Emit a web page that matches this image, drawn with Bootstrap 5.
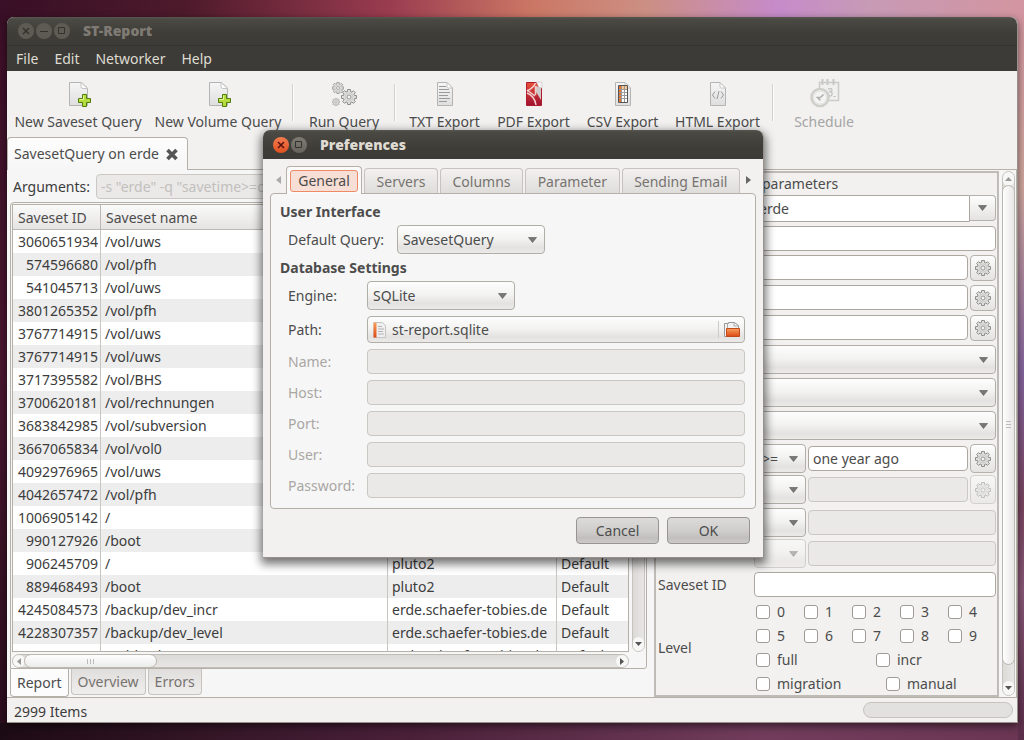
<!DOCTYPE html>
<html lang="en">
<head>
<meta charset="utf-8">
<meta name="viewport" content="width=device-width, initial-scale=1">
<title>ST-Report</title>
<link href="https://cdn.jsdelivr.net/npm/bootstrap@5.3.0/dist/css/bootstrap.min.css" rel="stylesheet">
<style>
  :root { --edge: #b5b0a8; --ink: #4c4c4c; }
  body {
    font: 14px/20px "Noto Sans", "Open Sans", sans-serif;
    color: #3c3c3c;
    padding: 17px 6px 17px 7px;
    min-height: 100vh;
    background:
      linear-gradient(90deg, #380f26 0, #4d1a2b 18%, #9a3c50 38%, #cb7765 52%, #cc8f83 63%, #c68bca 76%, #c79ab5 85%, #d395a0 100%) top / 100% 26px no-repeat,
      linear-gradient(180deg, #d395a0 0, #d3a9a0 25%, #8666a0 50%, #7a4560 68%, #8a5878 80%, #5a2d48 100%) right / 6px 100% no-repeat,
      linear-gradient(90deg, #1d0b14 0, #4a2039 40%, #723d5c 75%, #6a3653 100%) bottom / 100% 17px no-repeat,
      linear-gradient(180deg, #3c0f28, #4a1630 50%, #2a0d1c);
  }
  button, input, select { font: inherit; color: inherit; }
  .desk-window { background: #f2f1f0; border-radius: 7px 7px 0 0; box-shadow: 0 3px 8px rgba(0,0,0,.55); border: solid #98918b; border-width: 0 1px 1px 0; }
  .titlebar { height: 29px; border-radius: 7px 7px 0 0; background: linear-gradient(#57564f 0, #4a4943 8%, #3e3d38 60%, #3c3b37); font-weight: 700; }
  .main-title { color: #7f7b74; padding-left: 11px; border-bottom: 1px solid #343330; }
  .main-title b { padding-left: 11px; }
  .win-btn { width: 16px; height: 16px; padding: 0; border: 0; border-radius: 50%; background: #5d5b54; color: #33322e; margin-right: 2px; display: flex; }
  .win-btn.hot { background: linear-gradient(#f47b50, #e0501e); color: #511; }
  .win-btn.soft { background: linear-gradient(#7d7a72, #66645d); }
  .menu-strip { height: 25px; background: #3c3b37; padding-left: 9px; gap: 16px; }
  .menu-strip a { color: #dfdbd2; text-decoration: none; }
  .tools { height: 66px; padding: 6px 0 0 1px; }
  .tool { border: 0; background: none; padding: 0; color: var(--ink); width: 89px; white-space: nowrap; display: flex; flex-direction: column; align-items: center; justify-content: space-between; height: 55px; flex: none; }
  .tool svg { display: block; height: 33px; width: 33px; }
  .tool.wide { width: 140px; }
  .tool.mid { width: 92px; }
  .tool.web { width: 101px; }
  .tool:disabled { color: #a5a5a5; }
  .tool-sep { width: 10px; flex: none; height: 37px; margin-top: 7px; display: flex; justify-content: center; }
  .tool-sep::before { content: ""; border-left: 1px solid #d2d0cd; border-right: 1px solid #fbfbfb; }
  .book-tab { width: 181px; height: 33px; border: 1px solid var(--edge); border-bottom: 0; border-radius: 4px 4px 0 0; background: linear-gradient(#fdfdfd, #f6f6f6); padding-left: 6px; gap: 6px; color: var(--ink); margin-bottom: -1px; }
  .book-body { background: #f6f6f6; border: 1px solid var(--edge); border-width: 1px 1px 1px 0; }
  .report { flex: 1 1 0; min-width: 0; padding-left: 3px; }
  .entry { height: 25px; border: 1px solid #aca79f; border-radius: 4px; background: #fff; padding: 0 4px; min-width: 0; display: block; width: 100%; }
  .entry:disabled { background: #eae9e8; border-color: #cbc8c4; color: #c2bfbc; }
  .args { height: 32px; padding: 4px 8px 3px 3px; gap: 6px; }
  .table-frame { border: 1px solid var(--edge); border-radius: 4px 0 3px 0; padding: 1px 1px 0 1px; margin-right: 7px; height: 467px; }
  .list-view { height: 448px; border: 1px solid var(--edge); background: #fff; overflow: hidden; }
  .list-view table { width: 100%; table-layout: fixed; border-collapse: separate; border-spacing: 0; white-space: nowrap; line-height: 23px; color: #3c3c3c; }
  .list-view th { font-weight: 400; height: 25px; background: linear-gradient(#fafafa, #e6e4e2); border-right: 1px solid #bcb8b3; border-bottom: 1px solid #bcb8b3; padding: 0 5px; color: var(--ink); }
  .list-view td { height: 23px; padding: 0 4px; border-right: 1px solid #c9c6c2; }
  .list-view th:last-child, .list-view td:last-child { border-right: 0; }
  .list-view tbody tr:nth-child(even) { background: #ededed; }
  .list-view td:first-child { text-align: right; padding: 0 2px; }
  .vbar { width: 13px; flex: none; border: 1px solid #c6c2bd; border-radius: 8px; background: linear-gradient(90deg, #dcdad7, #e8e6e4); display: flex; flex-direction: column; align-items: center; }
  .hbar { height: 14px; border: 1px solid #c0bcb7; border-radius: 8px; background: linear-gradient(#dcdad7, #e8e6e4); display: flex; margin: 2px 16px 0 0; }
  .form-bar { margin: 1px 1px 1px 3px; }
  .knob { background: linear-gradient(#fefefe, #ececeb); border: 1px solid #bbb7b1; border-radius: 8px; margin: -1px; display: flex; align-items: center; justify-content: center; flex: none; width: 133px; }
  .knob.tall { background: linear-gradient(90deg, #fefefe, #e8e7e6); width: 13px; height: 480px; }
  .cap { display: flex; align-items: center; justify-content: center; background: #f7f7f6; flex: none; width: 12px; height: 12px; border-radius: 6px; }
  .vbar .cap { width: 11px; height: 14px; }
  .low-tabs { height: 28px; gap: 2px; align-items: flex-start; }
  .low-tabs a { border: 1px solid #c6c2be; border-top: 0; border-radius: 0 0 4px 4px; height: 26px; line-height: 26px; padding: 0 6px; color: #77736f; text-decoration: none; background: linear-gradient(#e0dedc, #efeeed); }
  .low-tabs a.on { height: 28px; line-height: 28px; background: #fcfcfc; color: var(--ink); border-color: var(--edge); }
  .params { flex: 0 0 344px; border: 2px solid #bfbbb6; background: #f2f1f0; margin-top: 1px; padding: 1px 1px 0 1px; color: var(--ink); }
  .prow { display: flex; margin-bottom: 4px; gap: 2px; padding-left: 97px; }
  .prow.near { margin-bottom: 2px; }
  .prow.head-row { height: 21px; margin-bottom: 0; padding-left: 105px; }
  .prow.full-row { padding-left: 0; gap: 0; }
  .row-name { flex: 0 0 97px; line-height: 25px; padding-left: 1px; }
  .row-name.level { flex-basis: 99px; }
  .level-row { margin: -1px 0 0; }
  .combo-h { height: 27px; }
  .drop { border: 1px solid #b1ada7; border-radius: 4px; appearance: none; color: var(--ink); padding: 0 24px 0 5px; height: 29px; background: url("data:image/svg+xml,%3Csvg xmlns='http://www.w3.org/2000/svg' width='9' height='6'%3E%3Cpath d='M.5.500h8L4.500 5.500z' fill='%23777' stroke='%23555' stroke-width='.6'/%3E%3C/svg%3E") no-repeat right 7px center, linear-gradient(#fdfdfd, #f3f3f2 45%, #e3e2e0 80%, #ebeae9); min-width: 0; }
  .drop:disabled { opacity: .5; }
  .drop.op { width: 52px; flex: none; padding-left: 7px; }
  .gear-btn { width: 26px; height: 26px; flex: none; border: 1px solid #b5b1ab; border-radius: 4px; background: linear-gradient(#fdfdfd, #e4e3e1); padding: 0; display: flex; align-items: center; justify-content: center; }
  .gear-btn.tall { height: 29px; }
  .gear-btn:disabled { opacity: .5; }
  .level-grid { flex: 1; }
  .level-grid > div { display: flex; height: 24px; align-items: center; }
  .level-grid > div:last-child { height: 23px; }
  .tick { display: flex; align-items: center; gap: 7px; flex: none; width: 48px; }
  .tick.half { width: 120px; }
  .tick.more { width: 130px; }
  .tick input { appearance: none; width: 14px; height: 14px; flex: none; border: 1px solid #9f9a94; border-radius: 3px; background: #fff; margin: 0; }
  .status { height: 24px; padding: 3px 4px 0 7px; }
  .meter { width: 150px; height: 16px; border: 1px solid #c7c4c0; border-radius: 8px; background: #e2e1df; margin-bottom: 3px; }

  /* Preferences window, lying over the main one */
  .prefs { position: absolute; left: 263px; top: 130px; width: 501px; background: #f2f1f0; border-radius: 7px 7px 0 0; box-shadow: 0 4px 10px 2px rgba(0,0,0,.55); border: solid #98918b; border-width: 0 1px 1px 0; }
  .prefs .titlebar { color: #dfdbd2; padding-left: 10px; }
  .prefs .titlebar b { padding-left: 11px; }
  .ptabs { padding: 7px 9px 0 9px; gap: 2px; align-items: flex-end; height: 34px; }
  .ptabs a { height: 25px; border: 1px solid #c6c2be; border-bottom: 0; border-radius: 4px 4px 0 0; text-decoration: none; color: #77736f; background: linear-gradient(#f2f1f0, #dfddda); line-height: 26px; text-align: center; flex: 1 1 auto; }
  .ptabs a.on { height: 28px; flex: 0 0 76px; background: #fafafa; border-color: var(--edge); margin-bottom: -1px; padding: 3px; color: var(--ink); position: relative; }
  .ptabs a.on span { display: block; height: 22px; line-height: 20px; border: 1px solid #ee8a66; border-radius: 3px; background: #f8dfd6; }
  .tab-arrow { width: 12px; height: 27px; display: flex; align-items: center; justify-content: center; padding: 0; border: 0; background: none; flex: none; }
  .ppanel { margin: 0 7px; border: 1px solid var(--edge); border-radius: 4px; background: #f6f6f6; padding: 8px 10px 10px 9px; color: var(--ink); }
  .ppanel h2 { font-size: 14px; line-height: 20px; font-weight: 700; margin: 0 0 3px; }
  .pline { display: flex; align-items: center; padding-left: 8px; margin-bottom: 6px; }
  .pline.first { margin-bottom: 4px; }
  .pline label { width: 79px; flex: none; }
  .pline.first label { width: 109px; }
  .pline .drop { width: 148px; }
  .pline.dim label { color: #a9a6a3; }
  .chooser { height: 27px; flex: 1; border: 1px solid #b1ada7; border-radius: 4px; background: linear-gradient(#fdfdfd, #f3f3f2 45%, #e3e2e0 80%, #ebeae9); padding: 0 3px 0 4px; display: flex; align-items: center; gap: 4px; color: var(--ink); }
  .chooser i { border-left: 1px solid #cfccc8; height: 17px; margin-left: auto; }
  .pactions { padding: 8px 13px 13px; }
  .pbtn { width: 83px; height: 27px; border: 1px solid #989590; border-radius: 4px; background: linear-gradient(#dcdbda, #cfcecd 50%, #c0bfbe 80%, #cccbca); color: var(--ink); padding: 0; }
</style>
</head>
<body>
<svg width="0" height="0" class="position-absolute" aria-hidden="true">
  <defs>
    <linearGradient id="paper" x1="0" y1="0" x2="0" y2="1"><stop offset="0" stop-color="#f6f6f6"/><stop offset="1" stop-color="#dedede"/></linearGradient>
    <linearGradient id="redp" x1="0" y1="0" x2="0" y2="1"><stop offset="0" stop-color="#e8513a"/><stop offset="1" stop-color="#a01030"/></linearGradient>
    <linearGradient id="orng" x1="0" y1="0" x2="0" y2="1"><stop offset="0" stop-color="#f7a05c"/><stop offset="1" stop-color="#dd4814"/></linearGradient>
    <symbol id="page" viewBox="0 0 16 24"><path d="M.5.500h9.500l5.500 5.500v17.500H.5z" fill="url(#paper)" stroke="#b4b4b4"/><path d="M10 .5v4q0 1.500 1.500 1.500h4z" fill="#fff" stroke="#c4c4c4"/></symbol>
    <symbol id="widepage" viewBox="0 0 19 24"><path d="M.5.500h12l6 5.500v17.500H.5z" fill="url(#paper)" stroke="#b4b4b4"/><path d="M12 .5v4q0 2 2 2h4.500z" fill="#fff" stroke="#c4c4c4"/></symbol>
    <symbol id="gear" viewBox="0 0 16 16"><path d="M6.500.5h3v2l1.500.6L12.400 1.700l2 2L13 5.100l.5 1.400h2v3h-2L13 11l1.400 1.400-2 2L11 13l-1.500.5v2h-3v-2L5 13l-1.400 1.400-2-2L3 11l-.5-1.500h-2v-3h2L3 5 1.600 3.600l2-2L5 3l1.500-.5z" fill="#dededc" stroke="#8f8f8c"/><circle cx="8" cy="8" r="2" fill="#f2f2f2" stroke="#9a9a98"/><circle cx="8" cy="8" r="4" fill="none" stroke="#c0c0be" stroke-width=".6"/></symbol>
  </defs>
</svg>

<main class="desk-window d-flex flex-column">
  <header class="titlebar main-title d-flex align-items-center">
    <button class="win-btn" aria-label="Close"><svg viewBox="0 0 16 16"><path d="M5 5l6 6M11 5l-6 6" stroke="currentColor" stroke-width="1.500"/></svg></button>
    <button class="win-btn" aria-label="Minimize"><svg viewBox="0 0 16 16"><path d="M4 8.500h8" stroke="currentColor"/></svg></button>
    <button class="win-btn" aria-label="Maximize"><svg viewBox="0 0 16 16"><path d="M4.500 4.500h6v6h-6z" fill="none" stroke="currentColor"/></svg></button>
    <b>ST-Report</b>
  </header>
  <nav class="menu-strip d-flex align-items-center"><a href="#">File</a><a href="#">Edit</a><a href="#">Networker</a><a href="#">Help</a></nav>

  <div class="tools d-flex">
    <button class="tool wide"><svg viewBox="0 0 33 33"><use href="#widepage" x="7" y="5" width="19" height="24"/><path d="M20.500 17.500h4v4h4v4h-4v4h-4v-4h-4v-4h4z" fill="#b5dc3c" stroke="#4f7d0a"/><path d="M21.500 18.500v4h-4" fill="none" stroke="#e4f59a"/></svg>New Saveset Query</button>
    <button class="tool wide"><svg viewBox="0 0 33 33"><use href="#widepage" x="7" y="5" width="19" height="24"/><path d="M20.500 17.500h4v4h4v4h-4v4h-4v-4h-4v-4h4z" fill="#b5dc3c" stroke="#4f7d0a"/><path d="M21.500 18.500v4h-4" fill="none" stroke="#e4f59a"/></svg>New Volume Query</button>
    <span class="tool-sep"></span>
    <button class="tool mid"><svg viewBox="0 0 33 33"><use href="#gear" x="4" y="5" width="12" height="12"/><use href="#gear" x="13" y="12" width="16" height="16"/><use href="#gear" x="4" y="21" width="8" height="8"/></svg>Run Query</button>
    <span class="tool-sep"></span>
    <button class="tool"><svg viewBox="0 0 33 33"><use href="#page" x="9" y="5" width="16" height="24"/><path d="M11 9.500h7M11 12.500h10M11 15.500h11M11 18.500h9M11 21.500h11M11 24.500h8" stroke="#999"/></svg>TXT Export</button>
    <button class="tool"><svg viewBox="0 0 33 33"><path d="M9.500 5.500h10l5 5v18h-15z" fill="url(#redp)" stroke="#b01a2e"/><path d="M19 9l5 2v12l-3-5-2-3z" fill="#cfcaca"/><path d="M19.500 5h5.500v6l-3-.5z" fill="#f4f4f4" stroke="#c4c4c4" stroke-width=".6"/><path d="M10 14C14 12 17 10 18.500 6" fill="none" stroke="#f3d0d0" stroke-width="1.500"/><path d="M10 16c5 2 8 6 9 12M10 13l8 6M18.500 9v9" fill="none" stroke="#f3d0d0" stroke-width="1.500"/></svg>PDF Export</button>
    <button class="tool"><svg viewBox="0 0 33 33"><use href="#page" x="9" y="5" width="16" height="24"/><path d="M12.500 8.500h9v17h-9z" fill="#fff"/><path d="M13 9h2v16h-2z" fill="#e8742c"/><path d="M15 9h6v3h-6z" fill="#f4c48c"/><path d="M15.500 9v16M18.500 9v16M13 12.500h8M13 15.500h8M13 18.500h8M13 21.500h8" stroke="#999"/><path d="M12.500 8.500h9v17h-9z" fill="none" stroke="#555"/></svg>CSV Export</button>
    <button class="tool web"><svg viewBox="0 0 33 33"><use href="#page" x="9" y="5" width="16" height="24"/><path d="M14 14.500l-2.500 3.500 2.500 3.500M20 14.500l2.500 3.500-2.500 3.500M18 14l-2 8" fill="none" stroke="#999"/></svg>HTML Export</button>
    <span class="tool-sep"></span>
    <button class="tool mid" disabled><svg viewBox="0 0 33 33"><path d="M11.500 5.500h19v18h-19z" fill="#f0f0ef" stroke="#cacac8" stroke-width="1.500"/><path d="M14.500 2v6M19.500 2v6M25.500 2v6" stroke="#c8c8c6" stroke-width="2"/><path d="M20 12q4-1 4 1t-3 1.500q4 .5 3 3t-3 1" fill="none" stroke="#c4c4c2" stroke-width="1.300"/><path d="M25.500 19.500h2" stroke="#bbb"/><circle cx="13" cy="20.500" r="8.500" fill="#f4f4f3" stroke="#cfcfc9" stroke-width="2.500" transform="translate(-1 0)"/><circle cx="12" cy="20.500" r="6.500" fill="none" stroke="#e0e0de"/><path d="M12.500 20.500l3-3M12.500 20.500h-3l3 3" stroke="#b0b0ae" stroke-width="1.600" fill="none"/></svg>Schedule</button>
  </div>

  <div class="book-tab d-flex align-items-center position-relative"><span>SavesetQuery on erde</span><svg width="14" height="13" viewBox="0 0 14 13" aria-label="Close tab"><path d="M2.500 2l9 9M11.500 2l-9 9" stroke="#555" stroke-width="3.600"/></svg></div>

  <section class="book-body d-flex flex-grow-1">
    <div class="report">
      <div class="args d-flex align-items-center"><label for="args">Arguments:</label><input id="args" class="entry" disabled value='-s "erde" -q "savetime&gt;=o'></div>
      <div class="table-frame">
        <div class="d-flex" style="gap:3px">
          <div class="list-view flex-grow-1">
            <table>
              <colgroup><col style="width:88px"><col><col style="width:169px"><col style="width:71px"></colgroup>
              <thead><tr><th>Saveset ID</th><th>Saveset name</th><th></th><th></th></tr></thead>
              <tbody>
                <tr><td>3060651934</td><td>/vol/uws</td><td></td><td></td></tr>
                <tr><td>574596680</td><td>/vol/pfh</td><td></td><td></td></tr>
                <tr><td>541045713</td><td>/vol/uws</td><td></td><td></td></tr>
                <tr><td>3801265352</td><td>/vol/pfh</td><td></td><td></td></tr>
                <tr><td>3767714915</td><td>/vol/uws</td><td></td><td></td></tr>
                <tr><td>3767714915</td><td>/vol/uws</td><td></td><td></td></tr>
                <tr><td>3717395582</td><td>/vol/BHS</td><td></td><td></td></tr>
                <tr><td>3700620181</td><td>/vol/rechnungen</td><td></td><td></td></tr>
                <tr><td>3683842985</td><td>/vol/subversion</td><td></td><td></td></tr>
                <tr><td>3667065834</td><td>/vol/vol0</td><td></td><td></td></tr>
                <tr><td>4092976965</td><td>/vol/uws</td><td></td><td></td></tr>
                <tr><td>4042657472</td><td>/vol/pfh</td><td></td><td></td></tr>
                <tr><td>1006905142</td><td>/</td><td></td><td></td></tr>
                <tr><td>990127926</td><td>/boot</td><td></td><td></td></tr>
                <tr><td>906245709</td><td>/</td><td>pluto2</td><td>Default</td></tr>
                <tr><td>889468493</td><td>/boot</td><td>pluto2</td><td>Default</td></tr>
                <tr><td>4245084573</td><td>/backup/dev_incr</td><td>erde.schaefer-tobies.de</td><td>Default</td></tr>
                <tr><td>4228307357</td><td>/backup/dev_level</td><td>erde.schaefer-tobies.de</td><td>Default</td></tr>
                <tr><td></td><td>/vol/backup/test</td><td>erde.schaefer-tobies.de</td><td>Default</td></tr>
              </tbody>
            </table>
          </div>
          <div class="vbar justify-content-end"><span class="cap"><svg width="7" height="4"><path d="M0 0h7L3.500 4z" fill="#555"/></svg></span></div>
        </div>
        <div class="hbar">
          <span class="cap"><svg width="4" height="7"><path d="M4 0v7L0 3.500z" fill="#999"/></svg></span>
          <span class="knob"><svg width="8" height="5"><path d="M.5 0v5M3.500 0v5M6.500 0v5" stroke="#bbb"/></svg></span>
          <span class="cap ms-auto"><svg width="4" height="7"><path d="M0 0v7L4 3.500z" fill="#555"/></svg></span>
        </div>
      </div>
      <nav class="low-tabs d-flex"><a class="on" href="#">Report</a><a href="#">Overview</a><a href="#">Errors</a></nav>
    </div>

    <form class="params">
      <div class="prow head-row"><span>parameters</span></div>
      <div class="prow gap-0"><input class="entry combo-h rounded-end-0" aria-label="Server" value="erde"><button type="button" class="gear-btn combo-h rounded-start-0 border-start-0" aria-label="Choose server"><svg width="9" height="6"><path d="M.5.500h8L4.500 5.500z" fill="#777" stroke="#555" stroke-width=".6"/></svg></button></div>
      <div class="prow"><input class="entry" aria-label="Client"></div>
      <div class="prow"><input class="entry" aria-label="Saveset name"><button type="button" class="gear-btn" aria-label="Options"><svg width="16" height="16"><use href="#gear"/></svg></button></div>
      <div class="prow"><input class="entry" aria-label="Group"><button type="button" class="gear-btn" aria-label="Options"><svg width="16" height="16"><use href="#gear"/></svg></button></div>
      <div class="prow"><input class="entry" aria-label="Pool"><button type="button" class="gear-btn" aria-label="Options"><svg width="16" height="16"><use href="#gear"/></svg></button></div>
      <div class="prow"><select class="drop w-100" aria-label="Filter 1"></select></div>
      <div class="prow"><select class="drop w-100" aria-label="Filter 2"></select></div>
      <div class="prow"><select class="drop w-100" aria-label="Filter 3"></select></div>
      <div class="prow near align-items-center"><select class="drop op" aria-label="Time operator"><option>&gt;=</option></select><input class="entry" aria-label="Time" value="one year ago"><button type="button" class="gear-btn tall" aria-label="Options"><svg width="16" height="16"><use href="#gear"/></svg></button></div>
      <div class="prow align-items-center"><select class="drop op" aria-label="Operator"></select><input class="entry" disabled aria-label="Value"><button type="button" disabled class="gear-btn tall" aria-label="Options"><svg width="16" height="16"><use href="#gear"/></svg></button></div>
      <div class="prow near align-items-center"><select class="drop op" aria-label="Operator"></select><input class="entry" disabled aria-label="Value"></div>
      <div class="prow align-items-center"><select class="drop op" disabled aria-label="Operator"></select><input class="entry" disabled aria-label="Value"></div>
      <div class="prow full-row"><label for="ssid" class="row-name">Saveset ID</label><input id="ssid" class="entry"></div>
      <div class="prow full-row level-row align-items-center"><span class="row-name level">Level</span>
        <div class="level-grid">
          <div><label class="tick"><input type="checkbox">0</label><label class="tick"><input type="checkbox">1</label><label class="tick"><input type="checkbox">2</label><label class="tick"><input type="checkbox">3</label><label class="tick"><input type="checkbox">4</label></div>
          <div><label class="tick"><input type="checkbox">5</label><label class="tick"><input type="checkbox">6</label><label class="tick"><input type="checkbox">7</label><label class="tick"><input type="checkbox">8</label><label class="tick"><input type="checkbox">9</label></div>
          <div><label class="tick half"><input type="checkbox">full</label><label class="tick"><input type="checkbox">incr</label></div>
          <div><label class="tick more"><input type="checkbox">migration</label><label class="tick w-auto"><input type="checkbox">manual</label></div>
        </div>
      </div>
    </form>
    <div class="vbar form-bar">
      <span class="cap"><svg width="7" height="4"><path d="M0 4h7L3.500 0z" fill="#999"/></svg></span>
      <span class="knob tall"><svg width="5" height="8"><path d="M0 .5h5M0 3.500h5M0 6.500h5" stroke="#bbb"/></svg></span>
      <span class="cap mt-auto"><svg width="7" height="4"><path d="M0 0h7L3.500 4z" fill="#555"/></svg></span>
    </div>
  </section>
  <footer class="status d-flex align-items-center"><span>2999 Items</span><span class="meter ms-auto"></span></footer>
</main>

<section class="prefs" role="dialog" aria-label="Preferences">
  <header class="titlebar d-flex align-items-center">
    <button class="win-btn hot" aria-label="Close"><svg viewBox="0 0 16 16"><path d="M5 5l6 6M11 5l-6 6" stroke="currentColor" stroke-width="1.500"/></svg></button>
    <button class="win-btn soft" aria-label="Maximize"><svg viewBox="0 0 16 16"><path d="M4.500 4.500h6v6h-6z" fill="none" stroke="currentColor"/></svg></button>
    <b>Preferences</b>
  </header>
  <nav class="ptabs d-flex">
    <button class="tab-arrow" aria-label="Previous tabs"><svg width="5" height="8"><path d="M5 0v8L0 4z" fill="#aaa"/></svg></button>
    <a class="on" href="#"><span>General</span></a><a href="#">Servers</a><a href="#">Columns</a><a href="#">Parameter</a><a href="#">Sending Email</a>
    <button class="tab-arrow" aria-label="More tabs"><svg width="5" height="8"><path d="M0 0v8L5 4z" fill="#666"/></svg></button>
  </nav>
  <div class="ppanel">
    <h2>User Interface</h2>
    <div class="pline first"><label for="dq">Default Query:</label><select id="dq" class="drop"><option>SavesetQuery</option></select></div>
    <h2>Database Settings</h2>
    <div class="pline"><label for="eng">Engine:</label><select id="eng" class="drop"><option>SQLite</option></select></div>
    <div class="pline"><label for="path">Path:</label><button id="path" class="chooser"><svg width="16" height="18" viewBox="0 0 16 18"><path d="M2 1.500h8.500l3 3v12H2z" fill="#efefef" stroke="#c4c4c4"/><path d="M1.500 1.500h3v15h-3z" fill="url(#orng)"/><path d="M6 5.500h4M6 8h6M6 10.500h5M6 13h6" stroke="#b4b4b4"/></svg>st-report.sqlite<i></i><svg width="18" height="18" viewBox="0 0 18 18"><path d="M1.500 15.500v-13h4v-1h6l4 3v11z" fill="#f2f2f2" stroke="#999"/><path d="M4.500 3v4M11 2v3h4" fill="none" stroke="#aaa"/><path d="M3.500 7.500h13v8h-13z" fill="url(#orng)" stroke="#c4491a"/></svg></button></div>
    <div class="pline dim"><label for="f1">Name:</label><input id="f1" class="entry" disabled></div>
    <div class="pline dim"><label for="f2">Host:</label><input id="f2" class="entry" disabled></div>
    <div class="pline dim"><label for="f3">Port:</label><input id="f3" class="entry" disabled></div>
    <div class="pline dim"><label for="f4">User:</label><input id="f4" class="entry" disabled></div>
    <div class="pline dim mb-0"><label for="f5">Password:</label><input id="f5" class="entry" disabled></div>
  </div>
  <div class="pactions d-flex justify-content-end gap-2"><button class="pbtn">Cancel</button><button class="pbtn">OK</button></div>
</section>
<script src="https://cdn.jsdelivr.net/npm/bootstrap@5.3.0/dist/js/bootstrap.bundle.min.js"></script>
</body>
</html>
